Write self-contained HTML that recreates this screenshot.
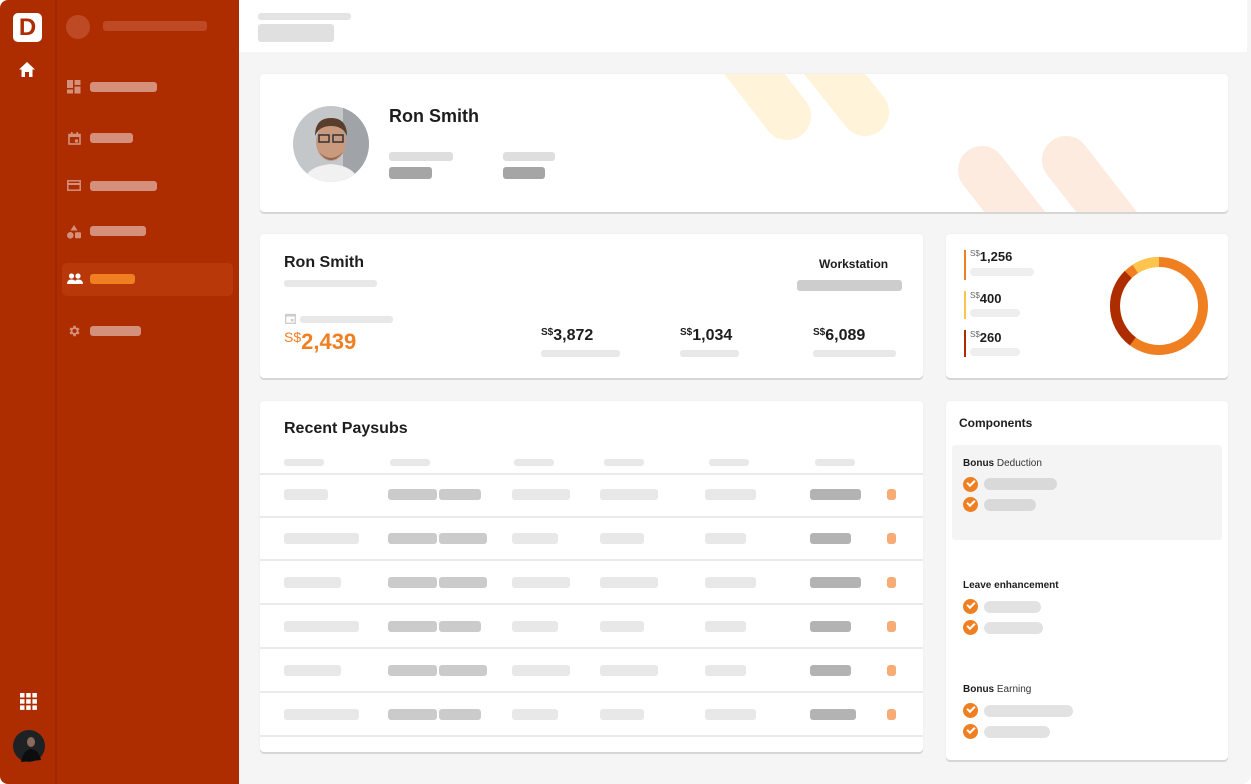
<!DOCTYPE html>
<html><head><meta charset="utf-8"><style>
*{margin:0;padding:0;box-sizing:border-box}
body{width:1251px;height:784px;background:#fff;position:relative;overflow:hidden;font-family:"Liberation Sans",Arial,sans-serif;color:#1d1d1d}
.a{position:absolute}
.card{position:absolute;background:#fff;border-radius:4px;box-shadow:0 2px 0 #d6d6d6,0 0 2px rgba(0,0,0,.05)}
.s{position:absolute;border-radius:3px}
.l{background:#e8e8e8}.m{background:#cbcbcb}.d{background:#b3b3b3}.o{background:#f5ac75}
.ps{background:#d4907a;height:10px;border-radius:3px;position:absolute;left:90px}
.b{font-weight:bold}
.line{position:absolute;left:260px;width:663px;height:2px;background:#eaeaea}
.chk{position:absolute;left:963px;width:15px;height:15px;border-radius:50%;background:#f07f22}
.chk:after{content:"";position:absolute;left:4px;top:3px;width:6px;height:3px;border-left:2px solid #fff;border-bottom:2px solid #fff;transform:rotate(-45deg)}
.pill{position:absolute;left:984px;height:12px;border-radius:6px;background:#e2e2e2}
</style></head><body>
<div class="a" style="left:239px;top:0;width:1012px;height:784px;background:#f5f5f5;border-radius:0 0 10px 0"></div>
<div class="a" style="left:239px;top:0;width:1008px;height:52px;background:#fff"></div>
<div class="s" style="left:258px;top:13px;width:93px;height:7px;background:#e4e4e4"></div>
<div class="s" style="left:258px;top:24px;width:76px;height:18px;background:#e0e0e0"></div>
<div class="a" style="left:0;top:0;width:239px;height:784px;background:#ae2d00;border-radius:8px 0 0 8px"></div>
<div class="a" style="left:55px;top:0;width:2px;height:784px;background:#9e2800"></div>
<div class="a" style="left:13px;top:13px;width:29px;height:29px;background:#fff;border-radius:5px;color:#ae2d00;font-weight:bold;font-size:24px;line-height:29px;text-align:center">D</div>
<svg class="a" style="left:18px;top:61px" width="18" height="17" viewBox="0 0 18 17"><path d="M9 1 L17 8.5 H14.5 V16 H11 V11 H7 V16 H3.5 V8.5 H1 Z" fill="#fff"/></svg>
<svg class="a" style="left:20px;top:693px" width="17" height="17"><g fill="#fff"><rect x="0" y="0" width="4.5" height="4.5"/><rect x="6.2" y="0" width="4.5" height="4.5"/><rect x="12.4" y="0" width="4.5" height="4.5"/><rect x="0" y="6.2" width="4.5" height="4.5"/><rect x="6.2" y="6.2" width="4.5" height="4.5"/><rect x="12.4" y="6.2" width="4.5" height="4.5"/><rect x="0" y="12.4" width="4.5" height="4.5"/><rect x="6.2" y="12.4" width="4.5" height="4.5"/><rect x="12.4" y="12.4" width="4.5" height="4.5"/></g></svg>
<svg class="a" style="left:13px;top:730px" width="32" height="32"><circle cx="16" cy="16" r="16" fill="#1f2224"/><ellipse cx="18" cy="12" rx="4" ry="5" fill="#8a6a58"/><path d="M8 32 Q10 20 18 19 Q26 20 28 30 Z" fill="#0d0d0d"/></svg>
<div class="a" style="left:66px;top:15px;width:24px;height:24px;border-radius:50%;background:#bd4a25"></div>
<div class="s" style="left:103px;top:21px;width:104px;height:10px;background:#bd4a25"></div>
<div class="a" style="left:62px;top:263px;width:171px;height:33px;background:#b8380a;border-radius:5px"></div>
<div class="ps" style="top:82px;width:67px"></div>
<div class="ps" style="top:133px;width:43px"></div>
<div class="ps" style="top:181px;width:67px"></div>
<div class="ps" style="top:226px;width:56px"></div>
<div class="ps" style="top:274px;width:45px;background:#f07f22"></div>
<div class="ps" style="top:326px;width:51px"></div>
<svg class="a" style="left:67px;top:80px" width="14" height="14"><g fill="#d4907a"><rect x="0" y="0" width="6" height="8"/><rect x="7.5" y="0" width="6" height="5"/><rect x="0" y="9.5" width="6" height="4"/><rect x="7.5" y="6.5" width="6" height="7"/></g></svg>
<svg class="a" style="left:68px;top:132px" width="13" height="13"><rect x="1" y="2.5" width="11" height="9.5" fill="none" stroke="#d4907a" stroke-width="1.6"/><rect x="1" y="2.5" width="11" height="2.5" fill="#d4907a"/><rect x="3" y="0" width="1.6" height="3" fill="#d4907a"/><rect x="8.4" y="0" width="1.6" height="3" fill="#d4907a"/><rect x="7" y="7.5" width="3" height="3" fill="#d4907a"/></svg>
<svg class="a" style="left:67px;top:180px" width="14" height="11"><rect x="0.8" y="0.8" width="12.4" height="9.4" fill="none" stroke="#d4907a" stroke-width="1.5"/><rect x="0.8" y="3" width="12.4" height="2" fill="#d4907a"/></svg>
<svg class="a" style="left:67px;top:225px" width="14" height="14"><path d="M7 0 L10.5 5.5 H3.5 Z" fill="#d4907a"/><circle cx="3.3" cy="10.3" r="3.3" fill="#d4907a"/><rect x="8" y="7.3" width="6" height="6" rx="1" fill="#d4907a"/></svg>
<svg class="a" style="left:67px;top:273px" width="16" height="12"><g fill="#fff"><circle cx="4.5" cy="3" r="2.6"/><circle cx="11" cy="3" r="2.6"/><path d="M0 11 Q0 6.5 4.5 6.5 Q9 6.5 9 11 Z"/><path d="M7.5 11 Q7.5 6.5 11 6.5 Q16 6.5 16 11 Z"/></g></svg>
<svg class="a" style="left:67px;top:324px" width="14" height="14" viewBox="0 0 24 24"><path fill="#d4907a" d="M19.4 13a7.5 7.5 0 0 0 0-2l2.1-1.6-2-3.5-2.5 1a7.7 7.7 0 0 0-1.7-1L14.9 3h-4l-.4 2.9a7.7 7.7 0 0 0-1.7 1l-2.5-1-2 3.5L6.4 11a7.5 7.5 0 0 0 0 2l-2.1 1.6 2 3.5 2.5-1a7.7 7.7 0 0 0 1.7 1l.4 2.9h4l.4-2.9a7.7 7.7 0 0 0 1.7-1l2.5 1 2-3.5zM12.9 15.5a3.5 3.5 0 1 1 0-7 3.5 3.5 0 0 1 0 7z"/></svg>

<div class="card" style="left:260px;top:74px;width:968px;height:138px;overflow:hidden">
<svg class="a" style="left:0;top:0" width="968" height="138"><g stroke-linecap="round" stroke-width="48"><line x1="456" y1="-50" x2="527" y2="42" stroke="#fff3d9"/><line x1="535" y1="-50" x2="605" y2="38" stroke="#fff3d9"/><line x1="722" y1="96" x2="800" y2="196" stroke="#fdebe0"/><line x1="806" y1="86" x2="884" y2="186" stroke="#fdebe0"/></g></svg>
</div>
<svg class="a" style="left:293px;top:106px" width="76" height="76"><defs><clipPath id="c"><circle cx="38" cy="38" r="38"/></clipPath></defs><g clip-path="url(#c)"><rect width="76" height="76" fill="#c4c7ca"/><rect x="50" width="26" height="76" fill="#a0a4a8"/><path d="M10 76 Q14 60 38 58 Q62 60 66 76 Z" fill="#f1f1f1"/><ellipse cx="38" cy="36" rx="15" ry="19" fill="#c99a7e"/><path d="M22 30 Q22 12 38 12 Q54 12 54 30 Q50 20 38 20 Q26 20 22 30Z" fill="#5a3e2c"/><rect x="26" y="29" width="10" height="7" fill="none" stroke="#333" stroke-width="1.5"/><rect x="40" y="29" width="10" height="7" fill="none" stroke="#333" stroke-width="1.5"/><path d="M26 46 Q38 58 50 46 Q44 54 38 54 Q32 54 26 46Z" fill="#8b6650"/></g></svg>
<div class="a b" style="left:389px;top:106px;font-size:18px">Ron Smith</div>
<div class="s" style="left:389px;top:152px;width:64px;height:9px;background:#dedede"></div>
<div class="s" style="left:389px;top:167px;width:43px;height:12px;background:#a5a5a5"></div>
<div class="s" style="left:503px;top:152px;width:52px;height:9px;background:#dedede"></div>
<div class="s" style="left:503px;top:167px;width:42px;height:12px;background:#a5a5a5"></div>

<div class="card" style="left:260px;top:234px;width:663px;height:144px"></div>
<div class="a b" style="left:284px;top:254px;font-size:16px">Ron Smith</div>
<div class="s l" style="left:284px;top:280px;width:93px;height:7px"></div>
<svg class="a" style="left:285px;top:313px" width="11" height="11"><rect x="0.7" y="1.5" width="9.6" height="8.8" fill="none" stroke="#ccc" stroke-width="1.3"/><rect x="0.7" y="1.5" width="9.6" height="2" fill="#ccc"/><rect x="6" y="6" width="2.5" height="2.5" fill="#ccc"/></svg>
<div class="s l" style="left:300px;top:316px;width:93px;height:7px"></div>
<div class="a" style="left:284px;top:329px;color:#f07f22;white-space:nowrap"><span style="font-size:14px;vertical-align:top">S$</span><span class="b" style="font-size:22px">2,439</span></div>
<div class="a b" style="left:541px;top:327px;font-size:16px"><span style="font-size:10px;vertical-align:top">S$</span>3,872</div>
<div class="s l" style="left:541px;top:350px;width:79px;height:7px"></div>
<div class="a b" style="left:680px;top:327px;font-size:16px"><span style="font-size:10px;vertical-align:top">S$</span>1,034</div>
<div class="s l" style="left:680px;top:350px;width:59px;height:7px"></div>
<div class="a b" style="left:813px;top:327px;font-size:16px"><span style="font-size:10px;vertical-align:top">S$</span>6,089</div>
<div class="s l" style="left:813px;top:350px;width:83px;height:7px"></div>
<div class="a b" style="left:819px;top:257px;font-size:12px">Workstation</div>
<div class="s" style="left:797px;top:280px;width:105px;height:11px;background:#cdcdcd"></div>

<div class="card" style="left:946px;top:234px;width:282px;height:144px"></div>
<div class="a" style="left:964px;top:250px;width:2px;height:30px;background:#f07f22"></div>
<div class="a" style="left:964px;top:291px;width:2px;height:28px;background:#fdc54e"></div>
<div class="a" style="left:964px;top:330px;width:2px;height:27px;background:#ae2d00"></div>
<div class="a b" style="left:970px;top:249px;font-size:13px"><span style="font-size:8px;font-weight:normal;color:#666;vertical-align:top">S$</span>1,256</div>
<div class="s" style="left:970px;top:268px;width:64px;height:8px;background:#eee;border-radius:4px"></div>
<div class="a b" style="left:970px;top:291px;font-size:13px"><span style="font-size:8px;font-weight:normal;color:#666;vertical-align:top">S$</span>400</div>
<div class="s" style="left:970px;top:309px;width:50px;height:8px;background:#eee;border-radius:4px"></div>
<div class="a b" style="left:970px;top:330px;font-size:13px"><span style="font-size:8px;font-weight:normal;color:#666;vertical-align:top">S$</span>260</div>
<div class="s" style="left:970px;top:348px;width:50px;height:8px;background:#eee;border-radius:4px"></div>
<svg class="a" style="left:1105px;top:252px" width="108" height="108"><g fill="none" stroke-width="10" transform="rotate(-90 54 54)"><circle cx="54" cy="54" r="44" stroke="#f07f22"/><circle cx="54" cy="54" r="44" stroke="#ae2d00" stroke-dasharray="76 300" stroke-dashoffset="-166"/><circle cx="54" cy="54" r="44" stroke="#fdc54e" stroke-dasharray="25 300" stroke-dashoffset="-251"/></g></svg>

<div class="card" style="left:260px;top:401px;width:663px;height:351px"></div>
<div class="a b" style="left:284px;top:420px;font-size:16px">Recent Paysubs</div>
<div class="s l" style="left:284px;top:459px;width:40px;height:7px"></div>
<div class="s l" style="left:390px;top:459px;width:40px;height:7px"></div>
<div class="s l" style="left:514px;top:459px;width:40px;height:7px"></div>
<div class="s l" style="left:604px;top:459px;width:40px;height:7px"></div>
<div class="s l" style="left:709px;top:459px;width:40px;height:7px"></div>
<div class="s l" style="left:815px;top:459px;width:40px;height:7px"></div>
<div class="line" style="top:473px"></div><div class="line" style="top:516px"></div><div class="line" style="top:559px"></div><div class="line" style="top:603px"></div><div class="line" style="top:647px"></div><div class="line" style="top:691px"></div><div class="line" style="top:735px"></div>
<div class="s l" style="left:284px;top:489px;width:44px;height:11px"></div><div class="s m" style="left:388px;top:489px;width:49px;height:11px"></div><div class="s m" style="left:439px;top:489px;width:42px;height:11px"></div><div class="s l" style="left:512px;top:489px;width:58px;height:11px"></div><div class="s l" style="left:600px;top:489px;width:58px;height:11px"></div><div class="s l" style="left:705px;top:489px;width:51px;height:11px"></div><div class="s d" style="left:810px;top:489px;width:51px;height:11px"></div><div class="s o" style="left:887px;top:489px;width:9px;height:11px"></div>
<div class="s l" style="left:284px;top:533px;width:75px;height:11px"></div><div class="s m" style="left:388px;top:533px;width:49px;height:11px"></div><div class="s m" style="left:439px;top:533px;width:48px;height:11px"></div><div class="s l" style="left:512px;top:533px;width:46px;height:11px"></div><div class="s l" style="left:600px;top:533px;width:44px;height:11px"></div><div class="s l" style="left:705px;top:533px;width:41px;height:11px"></div><div class="s d" style="left:810px;top:533px;width:41px;height:11px"></div><div class="s o" style="left:887px;top:533px;width:9px;height:11px"></div>
<div class="s l" style="left:284px;top:577px;width:57px;height:11px"></div><div class="s m" style="left:388px;top:577px;width:49px;height:11px"></div><div class="s m" style="left:439px;top:577px;width:48px;height:11px"></div><div class="s l" style="left:512px;top:577px;width:58px;height:11px"></div><div class="s l" style="left:600px;top:577px;width:58px;height:11px"></div><div class="s l" style="left:705px;top:577px;width:51px;height:11px"></div><div class="s d" style="left:810px;top:577px;width:51px;height:11px"></div><div class="s o" style="left:887px;top:577px;width:9px;height:11px"></div>
<div class="s l" style="left:284px;top:621px;width:75px;height:11px"></div><div class="s m" style="left:388px;top:621px;width:49px;height:11px"></div><div class="s m" style="left:439px;top:621px;width:42px;height:11px"></div><div class="s l" style="left:512px;top:621px;width:46px;height:11px"></div><div class="s l" style="left:600px;top:621px;width:44px;height:11px"></div><div class="s l" style="left:705px;top:621px;width:41px;height:11px"></div><div class="s d" style="left:810px;top:621px;width:41px;height:11px"></div><div class="s o" style="left:887px;top:621px;width:9px;height:11px"></div>
<div class="s l" style="left:284px;top:665px;width:57px;height:11px"></div><div class="s m" style="left:388px;top:665px;width:49px;height:11px"></div><div class="s m" style="left:439px;top:665px;width:48px;height:11px"></div><div class="s l" style="left:512px;top:665px;width:58px;height:11px"></div><div class="s l" style="left:600px;top:665px;width:58px;height:11px"></div><div class="s l" style="left:705px;top:665px;width:41px;height:11px"></div><div class="s d" style="left:810px;top:665px;width:41px;height:11px"></div><div class="s o" style="left:887px;top:665px;width:9px;height:11px"></div>
<div class="s l" style="left:284px;top:709px;width:75px;height:11px"></div><div class="s m" style="left:388px;top:709px;width:49px;height:11px"></div><div class="s m" style="left:439px;top:709px;width:42px;height:11px"></div><div class="s l" style="left:512px;top:709px;width:46px;height:11px"></div><div class="s l" style="left:600px;top:709px;width:44px;height:11px"></div><div class="s l" style="left:705px;top:709px;width:51px;height:11px"></div><div class="s d" style="left:810px;top:709px;width:46px;height:11px"></div><div class="s o" style="left:887px;top:709px;width:9px;height:11px"></div>

<div class="card" style="left:946px;top:401px;width:282px;height:359px"></div>
<div class="a b" style="left:959px;top:416px;font-size:12px">Components</div>
<div class="a" style="left:952px;top:445px;width:270px;height:95px;background:#f4f4f4;border-radius:3px"></div>
<div class="a" style="left:963px;top:458px;font-size:10px;color:#333"><b style="color:#1d1d1d">Bonus</b> Deduction</div>
<div class="chk" style="top:477px"></div><div class="pill" style="top:478px;width:73px;background:#d9d9d9"></div>
<div class="chk" style="top:497px"></div><div class="pill" style="top:499px;width:52px;background:#d9d9d9"></div>
<div class="a b" style="left:963px;top:580px;font-size:10px">Leave enhancement</div>
<div class="chk" style="top:599px"></div><div class="pill" style="top:601px;width:57px"></div>
<div class="chk" style="top:620px"></div><div class="pill" style="top:622px;width:59px"></div>
<div class="a" style="left:963px;top:684px;font-size:10px;color:#333"><b style="color:#1d1d1d">Bonus</b> Earning</div>
<div class="chk" style="top:703px"></div><div class="pill" style="top:705px;width:89px"></div>
<div class="chk" style="top:724px"></div><div class="pill" style="top:726px;width:66px"></div>
</body></html>
